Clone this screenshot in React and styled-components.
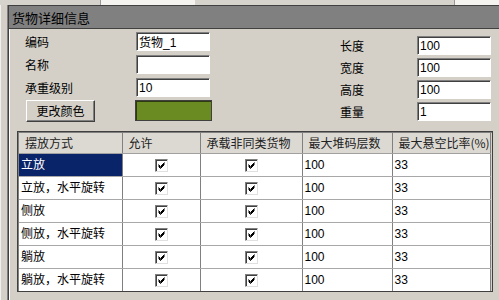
import React from 'react';
import styled, { createGlobalStyle } from 'styled-components';

const GlobalStyle = createGlobalStyle`
  html, body {
    margin: 0;
    padding: 0;
    background: #d4d0c8;
  }
  body {
    font-family: "Liberation Sans", "Noto Sans CJK SC", sans-serif;
    font-size: 12px;
    color: #000;
  }
`;

const Screen = styled.div`
  width: 499px;
  height: 300px;
  overflow: hidden;
  display: flex;
  flex-direction: column;
  background: #d4d0c8;
`;

const TopStrip = styled.div`
  height: 5px;
  display: flex;
  background: #d6d3cc;
`;

const StripPiece = styled.div`
  width: ${(p) => p.w}px;
  background: ${(p) => (p.light ? '#f4f3f0' : 'transparent')};
  border-right: ${(p) => (p.edge ? '1px solid #9a9a9a' : 'none')};
`;

const Body = styled.div`
  flex: 1;
  display: flex;
  min-height: 0;
`;

const LeftRail = styled.div`
  width: 6px;
  background: #d4d0c8;
  border-left: 1px solid #f0f0f0;
  border-right: 1px solid #808080;
`;

const Window = styled.div`
  flex: 1;
  display: flex;
  flex-direction: column;
  border-left: 1px solid #404040;
  border-top: 1px solid #404040;
  box-shadow: inset 1px 0 #ffffff;
`;

const TitleBar = styled.div`
  height: 22px;
  background: #808080;
  border-bottom: 1px solid #404040;
  display: flex;
  align-items: center;
  padding-left: 3px;
  font-family: "Noto Sans CJK SC", sans-serif;
  font-size: 13px;
  color: #000;
`;

const Content = styled.div`
  flex: 1;
  padding: 3px 0 0 8px;
  display: flex;
  flex-direction: column;
`;

const FormArea = styled.div`
  display: flex;
  height: 99px;
`;

const FieldGrid = styled.div`
  display: grid;
  grid-template-columns: ${(p) => p.cols};
  grid-auto-rows: ${(p) => p.rowH}px;
  row-gap: ${(p) => p.gap}px;
  align-items: center;
  margin-left: ${(p) => p.left}px;
  padding-top: ${(p) => p.top}px;
`;

const Label = styled.span`
  font-family: "Noto Sans CJK SC", sans-serif;
  font-size: 12px;
  line-height: 1;
`;

const TextBox = styled.div`
  width: ${(p) => p.w || 74}px;
  height: 19px;
  box-sizing: border-box;
  background: #fff;
  border-top: 1px solid #808080;
  border-left: 1px solid #808080;
  border-bottom: 1px solid #ffffff;
  border-right: 1px solid #ffffff;
  box-shadow: inset 1px 1px #404040;
  padding: 0 2px;
  display: flex;
  align-items: center;
  font-size: 12px;
  font-family: "Liberation Sans", "Noto Sans CJK SC", sans-serif;
`;

const PushButton = styled.button`
  width: 69px;
  height: 22px;
  margin-left: 1px;
  background: #d4d0c8;
  border-top: 1px solid #ffffff;
  border-left: 1px solid #ffffff;
  border-right: 1px solid #404040;
  border-bottom: 1px solid #404040;
  box-shadow: inset -1px -1px #808080;
  font-family: "Noto Sans CJK SC", sans-serif;
  font-size: 12px;
  padding: 0;
  color: #000;
`;

const Swatch = styled.div`
  width: 77px;
  height: 21px;
  box-sizing: border-box;
  margin-left: -1px;
  background: ${(p) => p.color};
  border: 1px solid #404040;
  box-shadow: inset 1px 1px #2f3a10;
`;

const TableFrame = styled.div`
  width: 476px;
  height: 161px;
  box-sizing: border-box;
  border: 1px solid #404040;
  box-shadow: inset 1px 1px #808080;
  padding: 1px 1px 0 1px;
  background: #d4d0c8;
  overflow: hidden;
`;

const Grid = styled.table`
  border-collapse: collapse;
  table-layout: fixed;
  width: 100%;
  background: #fff;
`;

const HeadRow = styled.tr`
  height: 20px;
`;

const BodyRow = styled.tr`
  height: 23px;
`;

const HeadCell = styled.th`
  padding: 0 0 0 6px;
  text-align: left;
  font-weight: normal;
  background: #dcd9d3;
  color: #222;
  border-right: 1px solid #808080;
  border-bottom: 1px solid #a0a0a0;
  font-family: "Noto Sans CJK SC", sans-serif;
  font-size: 12px;
  line-height: 14px;
  white-space: nowrap;
  overflow: hidden;
`;

const Cell = styled.td`
  padding: 0 0 0 ${(p) => (p.center ? 0 : 2)}px;
  text-align: ${(p) => (p.center ? 'center' : 'left')};
  background: ${(p) => (p.selected ? '#0a246a' : '#fff')};
  color: ${(p) => (p.selected ? '#fff' : '#000')};
  border-right: 1px solid #808080;
  border-bottom: 1px solid #a8a8a8;
  font-family: "Liberation Sans", "Noto Sans CJK SC", sans-serif;
  font-size: 12px;
  line-height: 14px;
  white-space: nowrap;
`;

const CheckBox = styled.span`
  display: inline-flex;
  width: 13px;
  height: 13px;
  box-sizing: border-box;
  vertical-align: middle;
  background: #fff;
  border-top: 1px solid #808080;
  border-left: 1px solid #808080;
  border-right: 1px solid #e0e0e0;
  border-bottom: 1px solid #e0e0e0;
  box-shadow: inset 1px 1px #404040;
  align-items: center;
  justify-content: center;
`;

const Check = () => (
  <CheckBox>
    <svg width="9" height="9" viewBox="0 0 9 9">
      <path d="M1.5 3.5 L3.5 5.5 L7.5 1.5 M1.5 4.5 L3.5 6.5 L7.5 2.5 M1.5 5.5 L3.5 7.5 L7.5 3.5" stroke="#000" strokeWidth="1" fill="none" />
    </svg>
  </CheckBox>
);

const columns = [
  { title: '摆放方式', width: 103 },
  { title: '允许', width: 78 },
  { title: '承载非同类货物', width: 102 },
  { title: '最大堆码层数', width: 90 },
  { title: '最大悬空比率(%)' },
];

const rows = ['立放', '立放，水平旋转', '侧放', '侧放，水平旋转', '躺放', '躺放，水平旋转'];

const App = () => {
  return (
    <>
      <GlobalStyle />
      <Screen>
        <TopStrip>
          <StripPiece w={100} edge />
          <StripPiece w={95} light />
          <StripPiece w={260} edge />
          <StripPiece w={44} light />
        </TopStrip>
        <Body>
          <LeftRail />
          <Window>
            <TitleBar>货物详细信息</TitleBar>
            <Content>
              <FormArea>
                <FieldGrid cols="111px 78px" rowH={19} gap={4} left={8} top={0}>
                  <Label>编码</Label>
                  <TextBox>货物_1</TextBox>
                  <Label>名称</Label>
                  <TextBox />
                  <Label>承重级别</Label>
                  <TextBox>10</TextBox>
                  <PushButton>更改颜色</PushButton>
                  <Swatch color="#6a8b22" />
                </FieldGrid>
                <FieldGrid cols="77px 74px" rowH={19} gap={3} left={126} top={4}>
                  <Label>长度</Label>
                  <TextBox>100</TextBox>
                  <Label>宽度</Label>
                  <TextBox>100</TextBox>
                  <Label>高度</Label>
                  <TextBox>100</TextBox>
                  <Label>重量</Label>
                  <TextBox>1</TextBox>
                </FieldGrid>
              </FormArea>
              <TableFrame>
                <Grid>
                  <colgroup>
                    {columns.map((c) => (
                      <col key={c.title} style={c.width ? { width: c.width } : undefined} />
                    ))}
                  </colgroup>
                  <thead>
                    <HeadRow>
                      {columns.map((c) => (
                        <HeadCell key={c.title}>{c.title}</HeadCell>
                      ))}
                    </HeadRow>
                  </thead>
                  <tbody>
                    {rows.map((name, i) => (
                      <BodyRow key={name}>
                        <Cell selected={i === 0}>{name}</Cell>
                        <Cell center><Check /></Cell>
                        <Cell center><Check /></Cell>
                        <Cell>100</Cell>
                        <Cell>33</Cell>
                      </BodyRow>
                    ))}
                  </tbody>
                </Grid>
              </TableFrame>
            </Content>
          </Window>
        </Body>
      </Screen>
    </>
  );
};

export default App;
